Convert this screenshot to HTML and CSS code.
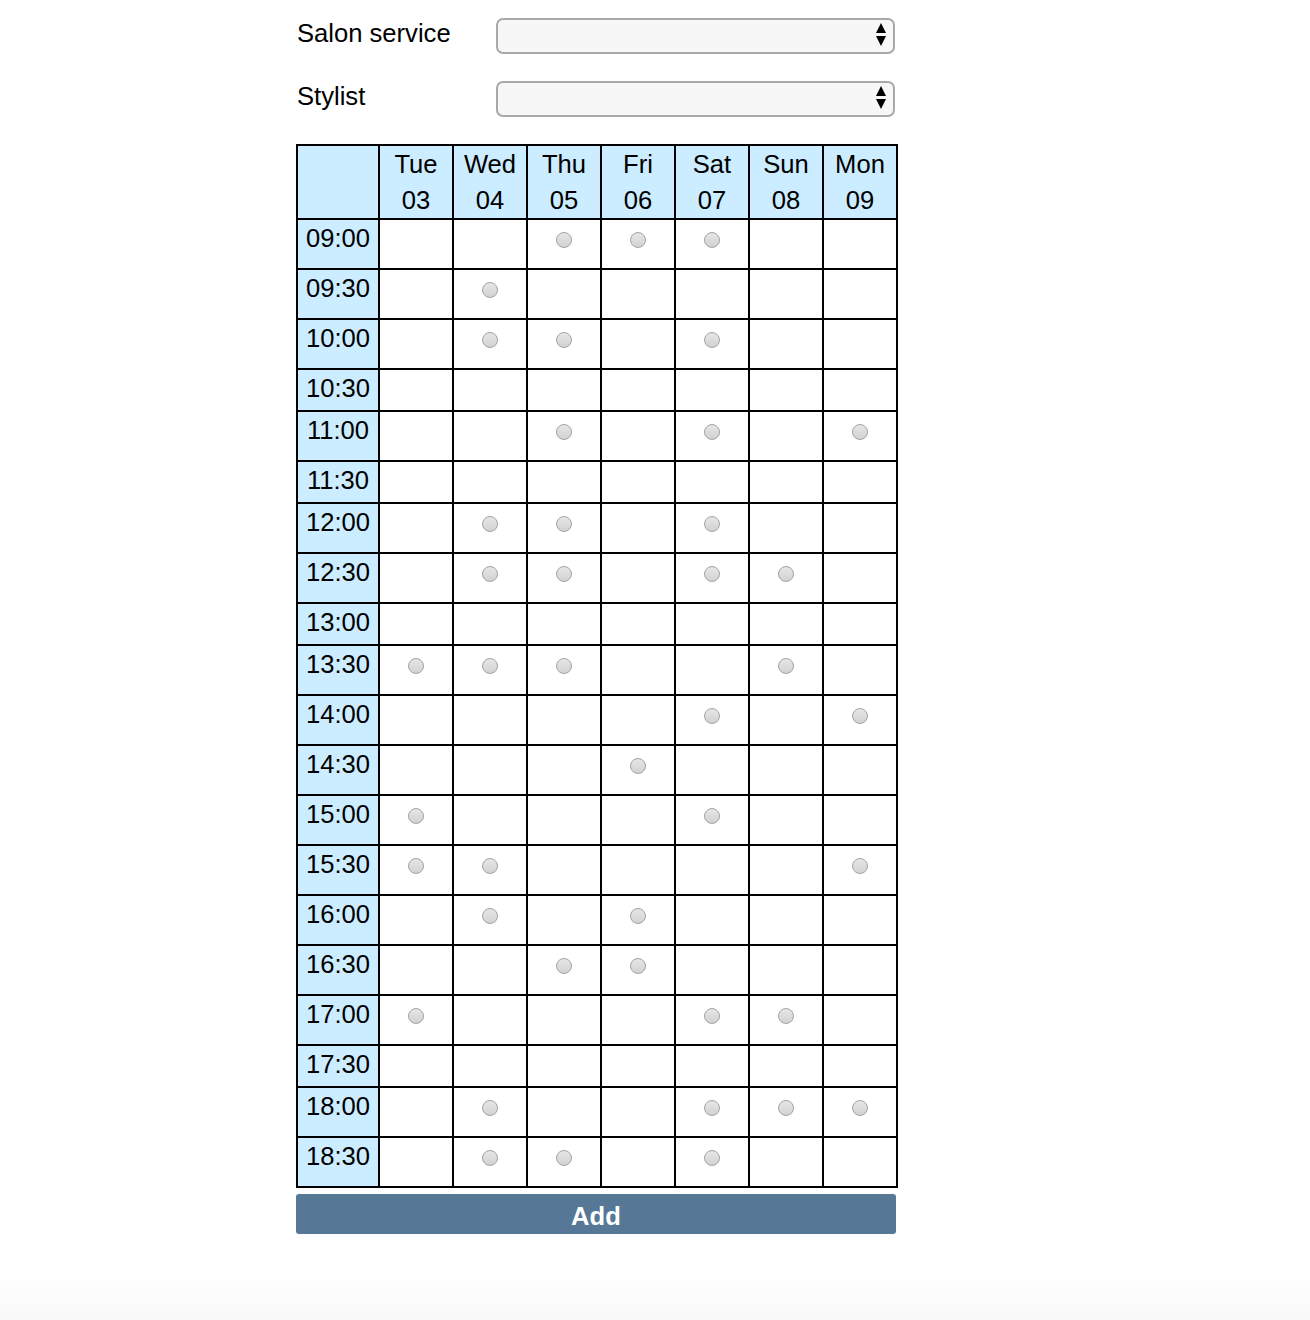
FILE: index.html
```html
<!DOCTYPE html>
<html lang="en">
<head>
    <meta charset="UTF-8">
    <meta name="viewport" content="width=device-width, initial-scale=1.0">
    <title>Salon Booking</title>
    <link rel="stylesheet" href="styles.css">
</head>
<body>
    <form id="booking-form" class="booking">
        <div class="field">
            <label for="service">Salon service</label>
            <div class="select-wrap"><select id="service"></select></div>
        </div>
        <div class="field">
            <label for="stylist">Stylist</label>
            <div class="select-wrap"><select id="stylist"></select></div>
        </div>

        <table class="slots">
            <thead>
                <tr id="day-row"><th></th></tr>
            </thead>
            <tbody id="slot-body"></tbody>
        </table>

        <button type="submit" class="add-btn">Add</button>
    </form>

    <script>
        const days = [
            ['Tue', '03'], ['Wed', '04'], ['Thu', '05'], ['Fri', '06'],
            ['Sat', '07'], ['Sun', '08'], ['Mon', '09']
        ];

        // free slots: time -> indexes of days that are open
        const openSlots = {
            '09:00': [2, 3, 4],
            '09:30': [1],
            '10:00': [1, 2, 4],
            '10:30': [],
            '11:00': [2, 4, 6],
            '11:30': [],
            '12:00': [1, 2, 4],
            '12:30': [1, 2, 4, 5],
            '13:00': [],
            '13:30': [0, 1, 2, 5],
            '14:00': [4, 6],
            '14:30': [3],
            '15:00': [0, 4],
            '15:30': [0, 1, 6],
            '16:00': [1, 3],
            '16:30': [2, 3],
            '17:00': [0, 4, 5],
            '17:30': [],
            '18:00': [1, 4, 5, 6],
            '18:30': [1, 2, 4]
        };

        const dayRow = document.getElementById('day-row');
        const slotBody = document.getElementById('slot-body');

        days.forEach(([name, date]) => {
            const th = document.createElement('th');
            th.innerHTML = `${name}<br>${date}`;
            dayRow.appendChild(th);
        });

        Object.keys(openSlots).forEach(time => {
            const row = document.createElement('tr');
            row.innerHTML = `<th class="time">${time}</th>`;
            days.forEach((day, index) => {
                const cell = document.createElement('td');
                if (openSlots[time].includes(index)) {
                    cell.innerHTML = `<input type="radio" name="slot" value="${day[1]}-${time}">`;
                }
                row.appendChild(cell);
            });
            slotBody.appendChild(row);
        });

        document.getElementById('booking-form').addEventListener('submit', e => e.preventDefault());
    </script>
</body>
</html>
```

FILE: styles.css
```css
html {
    min-height: 100%;
    background: linear-gradient(#fff 1270px, #f9f9f9 1320px);
}
body {
    margin: 0;
    font-family: 'Liberation Sans', Arial, Helvetica, sans-serif;
    font-size: 25.6px;
    color: #000;
}
.booking {
    width: 602px;
    margin-left: 296px;
    padding-top: 17px;
}
.field {
    display: flex;
    align-items: center;
    margin-bottom: 27px;
}
.field + .field {
    margin-bottom: 28px;
}
.field label {
    width: 200px;
    padding: 0 0 3px 1px;
    box-sizing: border-box;
}
.select-wrap {
    position: relative;
    width: 399px;
    height: 36px;
}
.select-wrap select {
    -webkit-appearance: none;
    appearance: none;
    width: 100%;
    height: 36px;
    margin: 0;
    background-color: #f7f7f7;
    border: 2px solid #a9a9a9;
    border-radius: 7px;
    box-sizing: border-box;
}
.select-wrap::before,
.select-wrap::after {
    content: '';
    position: absolute;
    right: 9px;
    top: 50%;
    border-left: 5.5px solid transparent;
    border-right: 5.5px solid transparent;
    pointer-events: none;
}
.select-wrap::before {
    margin-top: -12px;
    border-bottom: 10px solid #000;
}
.select-wrap::after {
    margin-top: 1px;
    border-top: 10px solid #000;
}
.slots {
    width: 602px;
    table-layout: fixed;
    border-collapse: separate;
    border-spacing: 0;
    border-top: 2px solid #000;
    border-left: 2px solid #000;
}
.slots th,
.slots td {
    border-right: 2px solid #000;
    border-bottom: 2px solid #000;
    padding: 0;
    vertical-align: top;
    text-align: center;
    font-weight: normal;
    line-height: 36px;
}
.slots thead th {
    width: 72px;
    background-color: #ccecff;
}
.slots thead th:first-child {
    width: 80px;
}
.slots .time {
    background-color: #ccecff;
    padding-bottom: 4px;
}
.slots td {
    padding-bottom: 4px;
}
.slots input[type="radio"] {
    -webkit-appearance: none;
    appearance: none;
    display: block;
    width: 16px;
    height: 16px;
    margin: 12px auto 16px;
    border: 1px solid #a3a3a3;
    border-radius: 50%;
    background: linear-gradient(#e6e6e6, #d2d2d2);
    box-sizing: border-box;
}
.add-btn {
    display: block;
    width: 600px;
    height: 40px;
    margin-top: 6px;
    padding: 4px 0 0;
    background-color: #567796;
    color: #fff;
    border: none;
    border-radius: 3px;
    font-family: inherit;
    font-size: 25.6px;
    font-weight: bold;
    cursor: pointer;
}
```
